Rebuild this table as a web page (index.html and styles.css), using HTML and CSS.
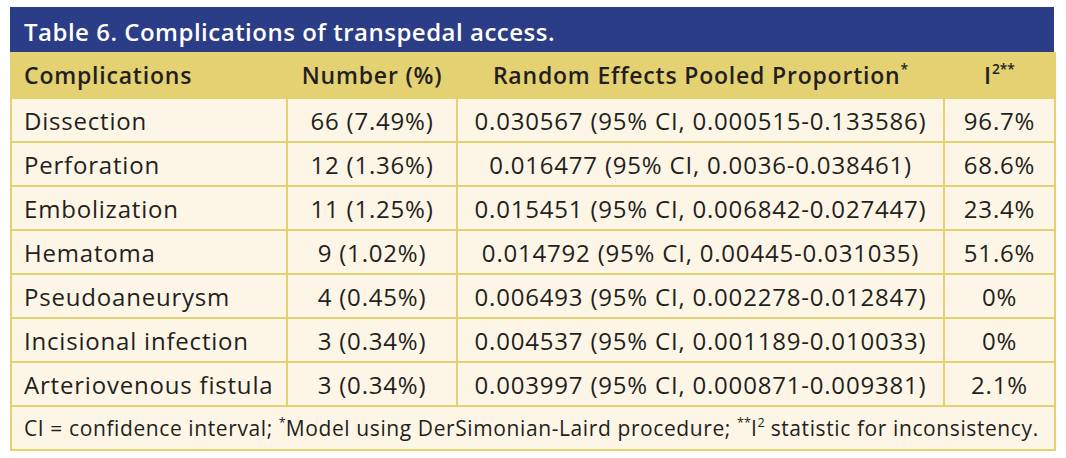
FILE: index.html
```html
<!DOCTYPE html>
<html>
<head>
<meta charset="utf-8">
<link rel="stylesheet" href="styles.css">
</head>
<body>
<div class="wrap">
  <div class="title">Table 6. Complications of transpedal access.</div>
  <table class="tbl">
    <colgroup>
      <col class="c1"><col class="c2"><col class="c3"><col class="c4">
    </colgroup>
    <thead>
      <tr>
        <th class="left">Complications</th>
        <th>Number (%)</th>
        <th>Random Effects Pooled Proportion<sup>*</sup></th>
        <th>I<sup>2**</sup></th>
      </tr>
    </thead>
    <tbody>
      <tr><td class="left">Dissection</td><td>66 (7.49%)</td><td>0.030567 (95% CI, 0.000515-0.133586)</td><td>96.7%</td></tr>
      <tr><td class="left">Perforation</td><td>12 (1.36%)</td><td>0.016477 (95% CI, 0.0036-0.038461)</td><td>68.6%</td></tr>
      <tr><td class="left">Embolization</td><td>11 (1.25%)</td><td>0.015451 (95% CI, 0.006842-0.027447)</td><td>23.4%</td></tr>
      <tr><td class="left">Hematoma</td><td>9 (1.02%)</td><td>0.014792 (95% CI, 0.00445-0.031035)</td><td>51.6%</td></tr>
      <tr><td class="left">Pseudoaneurysm</td><td>4 (0.45%)</td><td>0.006493 (95% CI, 0.002278-0.012847)</td><td>0%</td></tr>
      <tr><td class="left">Incisional infection</td><td>3 (0.34%)</td><td>0.004537 (95% CI, 0.001189-0.010033)</td><td>0%</td></tr>
      <tr><td class="left">Arteriovenous fistula</td><td>3 (0.34%)</td><td>0.003997 (95% CI, 0.000871-0.009381)</td><td>2.1%</td></tr>
      <tr><td class="left foot" colspan="4">CI = confidence interval; <sup>*</sup>Model using DerSimonian-Laird procedure; <sup>**</sup>I<sup>2</sup> statistic for inconsistency.</td></tr>
    </tbody>
  </table>
</div>
</body>
</html>
```
FILE: styles.css
```css
html, body { margin: 0; padding: 0; background: #ffffff; }
body { font-family: "Open Sans", "Noto Sans", sans-serif; color: #231f20; }
.wrap { width: 1044px; margin: 7px 0 0 10px; }
.title {
  background: #2b3d87;
  color: #ffffff;
  font-weight: 600;
  font-size: 24px;
  letter-spacing: 0.5px;
  height: 45px;
  line-height: 50px;
  padding-left: 14px;
  box-sizing: border-box;
  white-space: nowrap;
}
.tbl { width: 1044px; border-collapse: collapse; table-layout: fixed; }
.c1 { width: 276px; }
.c2 { width: 170px; }
.c3 { width: 487px; }
.c4 { width: 111px; }
.tbl th {
  background: #e4d172;
  font-weight: 600;
  font-size: 23px;
  letter-spacing: 0.8px;
  height: 45px;
  padding: 0 12px;
  text-align: center;
  border-left: 2px solid #e4d172;
  border-right: 2px solid #e4d172;
  white-space: nowrap;
}
.tbl td {
  background: #fdf6e7;
  font-size: 24px;
  letter-spacing: 0.8px;
  height: 44px;
  padding: 0 12px;
  text-align: center;
  border: 2px solid #e4d172;
  box-sizing: border-box;
  white-space: nowrap;
}
.tbl .left { text-align: left; }
.tbl td.foot { font-size: 21px; letter-spacing: 0.6px; }
sup { font-size: 60%; line-height: 0; vertical-align: 0.7em; letter-spacing: 0; }
```
